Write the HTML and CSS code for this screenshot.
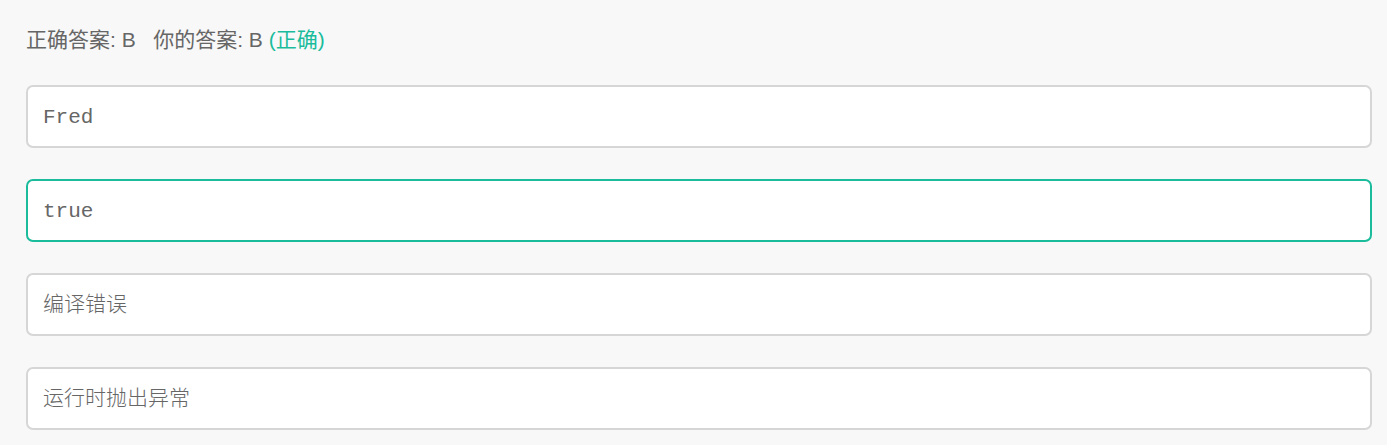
FILE: index.html
```html
<!DOCTYPE html>
<html lang="zh">
<head>
<meta charset="utf-8">
<link rel="stylesheet" href="styles.css">
</head>
<body>
<div class="page">
  <div class="result">正确答案: B&nbsp;&nbsp;&nbsp;你的答案: B <span class="ok">(正确)</span></div>
  <div class="options">
    <div class="option"><span class="code">Fred</span></div>
    <div class="option selected"><span class="code">true</span></div>
    <div class="option cjk"><span class="code">编译错误</span></div>
    <div class="option cjk"><span class="code">运行时抛出异常</span></div>
  </div>
</div>
</body>
</html>
```
FILE: styles.css
```css
html, body {
  margin: 0;
  padding: 0;
  background: #f8f8f8;
}
.page {
  padding: 25px 15px 0 26px;
}
.result {
  font-family: "Liberation Sans", "Noto Sans CJK SC", sans-serif;
  font-size: 21px;
  line-height: 30px;
  color: #666;
  margin-bottom: 30px;
}
.ok {
  color: #1abc9c;
}
.options {
  display: flex;
  flex-direction: column;
  gap: 31px;
}
.option {
  box-sizing: border-box;
  height: 63px;
  border: 2px solid #d6d6d6;
  border-radius: 7px;
  background: #fff;
  display: flex;
  align-items: center;
  padding: 2px 15px 0;
}
.option.cjk {
  padding: 0 15px 6px;
}
.option.cjk .code {
  font-weight: 300;
}
.option.selected {
  border-color: #1abc9c;
}
.code {
  font-family: "Liberation Mono", "Noto Sans CJK SC", monospace;
  font-size: 21px;
  color: #666;
}
```
